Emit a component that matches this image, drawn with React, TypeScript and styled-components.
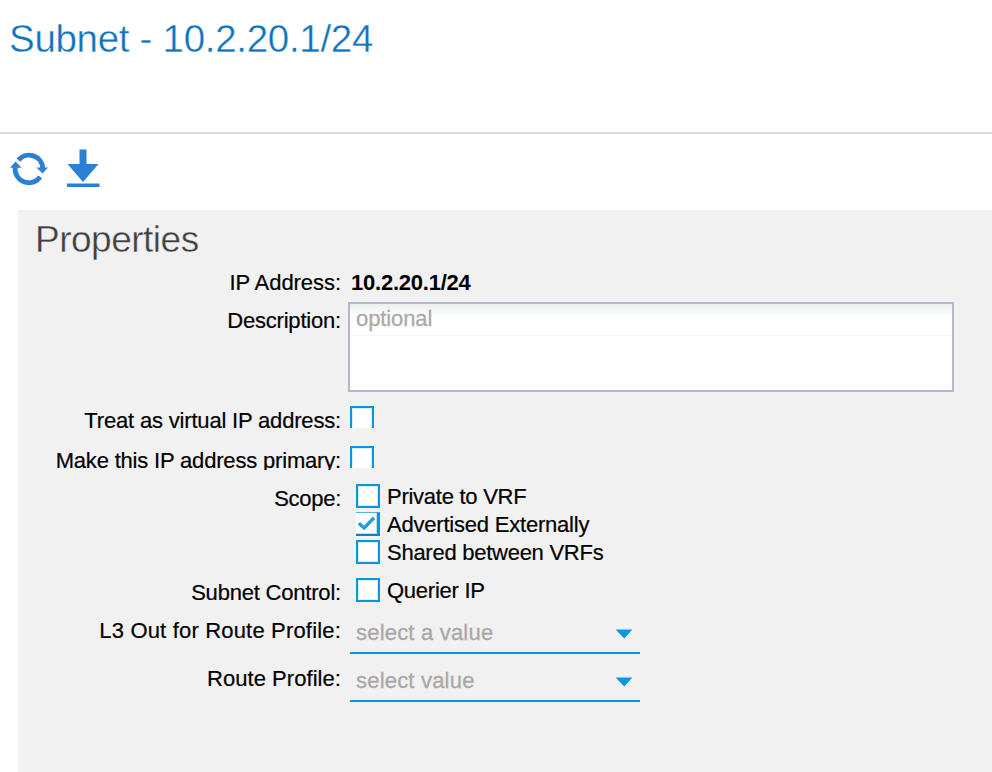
import React from "react";
import styled, { createGlobalStyle, css } from "styled-components";

const GlobalStyle = createGlobalStyle`
  * { box-sizing: border-box; }
  html, body { margin: 0; padding: 0; background: #fff; overflow: hidden; }
  body { font-family: "Liberation Sans", Arial, Helvetica, sans-serif; color: #000; }
`;

const Page = styled.main`
  width: 992px;
  height: 772px;
  display: flex;
  flex-direction: column;
  overflow: hidden;
`;

const Header = styled.header`
  height: 134px;
  flex: none;
  border-bottom: 2px solid #dcdcdc;
  padding: 16px 0 0 9px;
`;

/* The background-coloured stroke trims the glyph edges to a light weight. */
const Title = styled.h1`
  margin: 0;
  font-size: 38.5px;
  font-weight: 400;
  line-height: 46px;
  letter-spacing: -0.3px;
  white-space: nowrap;
  color: #0f74bd;
  -webkit-text-stroke: 0.35px #fff;
`;

const Toolbar = styled.div`
  height: 76px;
  flex: none;
  display: flex;
  align-items: flex-start;
  gap: 18px;
  padding: 14px 0 0 10px;
`;

const ToolButton = styled.button`
  width: 38px;
  height: 42px;
  padding: 0;
  border: 0;
  background: none;
  color: #2b80d5;
  svg { display: block; }
`;

const Panel = styled.section`
  flex: 1;
  margin-left: 18px;
  background: #f1f1f1;
  padding-top: 6px;
`;

const PanelTitle = styled.h2`
  margin: 0 0 6px 17px;
  height: 46px;
  font-size: 37px;
  line-height: 48px;
  font-weight: 400;
  letter-spacing: -0.5px;
  color: #404040;
  -webkit-text-stroke: 0.4px #f1f1f1;
`;

const Row = styled.div<{ $height: number }>`
  display: grid;
  grid-template-columns: 323px 1fr;
  align-items: start;
  height: ${(p) => p.$height}px;
`;

const text = css`
  font-size: 22px;
  line-height: 30px;
  white-space: nowrap;
  -webkit-text-stroke: 0.2px currentColor;
`;

const Label = styled.label<{ $top?: number; $spacing?: number; $clip?: boolean }>`
  ${text}
  text-align: right;
  margin-top: ${(p) => p.$top ?? 0}px;
  letter-spacing: ${(p) => p.$spacing ?? -0.16}px;
  ${(p) => p.$clip && css`height: 24px; overflow: hidden;`}
`;

const Value = styled.strong`
  ${text}
  -webkit-text-stroke: 0;
  margin-left: 10px;
  letter-spacing: -0.23px;
`;

const Description = styled.textarea`
  display: block;
  width: 606px;
  height: 90px;
  margin-left: 7px;
  padding: 1px 6px;
  resize: none;
  outline: 0;
  border: 2px solid #b4b6ca;
  border-radius: 0;
  background:
    linear-gradient(#f7f7f7, #f7f7f7) 0 31px / 100% 1px no-repeat,
    linear-gradient(#ecf1f0, #fff 14px);
  font-family: inherit;
  font-size: 22px;
  line-height: 28px;
  letter-spacing: -0.1px;
  &::placeholder { color: #aaa; opacity: 1; -webkit-text-stroke: 0.3px #aaa; }
`;

const Options = styled.div`
  display: flex;
  flex-direction: column;
  gap: 4px;
  margin-left: 15px;
`;

const Option = styled.label<{ $spacing: number }>`
  ${text}
  display: flex;
  height: 24px;
  gap: 7px;
  line-height: 26px;
  letter-spacing: ${(p) => p.$spacing}px;
`;

const Box = styled.span<{ $cut?: boolean; $checked?: boolean }>`
  flex: none;
  display: block;
  width: 24px;
  height: ${(p) => (p.$cut ? 22 : 24)}px;
  margin-left: ${(p) => (p.$cut ? 9 : 0)}px;
  background: #fff;
  border: 2px solid #0a96d9;
  box-shadow: inset 0 0 0 1px #d4eef9;
  ${(p) =>
    p.$cut &&
    css`
      border-bottom: 0;
      box-shadow: inset 1px 1px #d4eef9, inset -1px 0 #d4eef9;
    `}
  ${(p) =>
    p.$checked &&
    css`
      border-width: 1px 3px 2px 0;
      border-color: #50b4e2 #0a96d9 #1680b5 #fff;
      box-shadow: inset -1px -1px #b5dff2;
    `}
  svg { display: block; }
`;

const Select = styled.div<{ $spacing: number }>`
  ${text}
  -webkit-text-stroke: 0.35px currentColor;
  display: flex;
  justify-content: space-between;
  width: 290px;
  height: 38px;
  margin-left: 9px;
  padding: 2px 7px 0 6px;
  border-bottom: 2px solid #0096dc;
  color: #a9a9a9;
  letter-spacing: ${(p) => p.$spacing}px;
  svg { margin-top: 11px; }
`;

const RefreshIcon = () => (
  <svg width="38" height="42" viewBox="0 0 38 42" fill="none">
    <path d="M8.4 12.1A13.8 13.8 0 0 1 32.8 20.5" stroke="currentColor" strokeWidth="4.8" />
    <path d="M30.2 28.8A13.8 13.8 0 0 1 5.2 19" stroke="currentColor" strokeWidth="4.8" />
    <path d="M26.3 19.5H38L32.6 25.5Z" fill="currentColor" />
    <path d="M0 19.8L5.6 13.5L11.6 19.8Z" fill="currentColor" />
  </svg>
);

const DownloadIcon = () => (
  <svg width="38" height="42" viewBox="0 0 38 42" fill="currentColor">
    <path d="M13.5 1.5H20.5V16H32.5L17 34L1.5 16H13.5Z" />
    <path d="M1 35.5H33.5V39H1Z" />
  </svg>
);

const CheckIcon = () => (
  <svg width="21" height="20" viewBox="0 0 21 20" fill="none">
    <path d="M2.8 10.2L8.2 15L18 4.8" stroke="#219fd9" strokeWidth="3.4" />
  </svg>
);

const Caret = () => (
  <svg width="18" height="10" viewBox="0 0 18 10">
    <path d="M.6 .6H17.4L9.2 9.6Z" fill="#0a98dc" />
  </svg>
);

const scopes = [
  { name: "Private to VRF", spacing: -0.26, checked: false },
  { name: "Advertised Externally", spacing: -0.21, checked: true },
  { name: "Shared between VRFs", spacing: -0.26, checked: false },
];

export default function App() {
  return (
    <Page>
      <GlobalStyle />
      <Header>
        <Title>Subnet - 10.2.20.1/24</Title>
      </Header>
      <Toolbar>
        <ToolButton aria-label="Refresh"><RefreshIcon /></ToolButton>
        <ToolButton aria-label="Download"><DownloadIcon /></ToolButton>
      </Toolbar>
      <Panel>
        <PanelTitle>Properties</PanelTitle>
        <Row $height={34}>
          <Label $spacing={-0.05}>IP Address:</Label>
          <Value>10.2.20.1/24</Value>
        </Row>
        <Row $height={104}>
          <Label $top={4} $spacing={-0.2}>Description:</Label>
          <Description placeholder="optional" />
        </Row>
        <Row $height={40}>
          <Label $spacing={-0.18}>Treat as virtual IP address:</Label>
          <Box $cut />
        </Row>
        <Row $height={38}>
          <Label $clip $spacing={-0.18}>Make this IP address primary:</Label>
          <Box $cut />
        </Row>
        <Row $height={94}>
          <Label $spacing={-0.28}>Scope:</Label>
          <Options>
            {scopes.map((s) => (
              <Option key={s.name} $spacing={s.spacing}>
                <Box $checked={s.checked}>{s.checked && <CheckIcon />}</Box>
                {s.name}
              </Option>
            ))}
          </Options>
        </Row>
        <Row $height={38}>
          <Label $spacing={-0.2}>Subnet Control:</Label>
          <Options>
            <Option $spacing={-0.25}><Box />Querier IP</Option>
          </Options>
        </Row>
        <Row $height={48}>
          <Label $spacing={0.18}>L3 Out for Route Profile:</Label>
          <Select $spacing={0.2}><span>select a value</span><Caret /></Select>
        </Row>
        <Row $height={48}>
          <Label $spacing={0.05}>Route Profile:</Label>
          <Select $spacing={0.2}><span>select value</span><Caret /></Select>
        </Row>
      </Panel>
    </Page>
  );
}
